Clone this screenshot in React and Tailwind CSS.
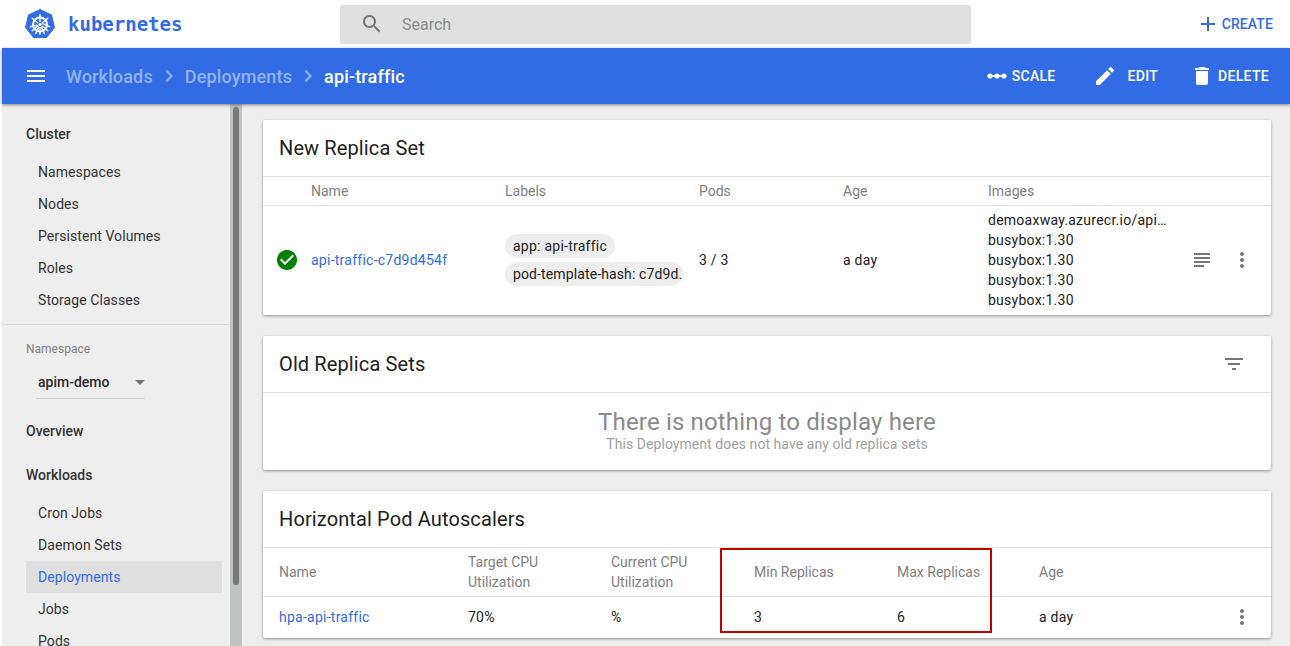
import React from 'react';

const roboto = { fontFamily: 'Roboto, sans-serif' };

const clusterItems = ['Namespaces', 'Nodes', 'Persistent Volumes', 'Roles', 'Storage Classes'];
const workloadItems = ['Cron Jobs', 'Daemon Sets', 'Deployments', 'Jobs', 'Pods'];

const KubeLogo = () => (
  <svg width="30" height="30" viewBox="0 0 30 30">
    <path d="M15 0.5 L26.5 6 L29.5 18.5 L21.5 28.5 L8.5 28.5 L0.5 18.5 L3.5 6 Z" fill="#326ce5" stroke="#326ce5" strokeLinejoin="round" />
    <g stroke="#fff" fill="none" strokeLinecap="round">
      <circle cx="15" cy="15.5" r="7" strokeWidth="2" />
      <path d="M15 5.5V12.5M15 18.5V25.5M7.2 9.3L12.7 13.7M17.3 17.3L22.8 21.7M22.8 9.3L17.3 13.7M12.7 17.3L7.2 21.7M5.3 17.7L12 16.2M18 14.8L24.7 17.7M10.7 24.5L13.7 18.2M16.3 18.2L19.3 24.5" strokeWidth="1.4" />
    </g>
    <circle cx="15" cy="15.5" r="1.6" fill="#fff" />
  </svg>
);

const Icon = ({ d, size = 24, className = '' }) => (
  <svg width={size} height={size} viewBox="0 0 24 24" fill="currentColor" className={className}>
    <path d={d} />
  </svg>
);

const icons = {
  search: 'M15.5 14h-.79l-.28-.27C15.41 12.59 16 11.11 16 9.5 16 5.91 13.09 3 9.5 3S3 5.91 3 9.5 5.91 16 9.5 16c1.61 0 3.09-.59 4.23-1.57l.27.28v.79l5 4.99L20.49 19l-4.99-5zm-6 0C7.01 14 5 11.99 5 9.5S7.01 5 9.5 5 14 7.01 14 9.5 11.99 14 9.5 14z',
  add: 'M19 13h-6v6h-2v-6H5v-2h6V5h2v6h6v2z',
  menu: 'M3 18h18v-2H3v2zm0-5h18v-2H3v2zm0-7v2h18V6H3z',
  chevron: 'M10 6L8.59 7.41 13.17 12l-4.58 4.59L10 18l6-6z',
  edit: 'M3 17.25V21h3.75L17.81 9.94l-3.75-3.75L3 17.25zM20.71 7.04c.39-.39.39-1.02 0-1.41l-2.34-2.34c-.39-.39-1.02-.39-1.41 0l-1.83 1.83 3.75 3.75 1.83-1.83z',
  trash: 'M6 19c0 1.1.9 2 2 2h8c1.1 0 2-.9 2-2V7H6v12zM19 4h-3.5l-1-1h-5l-1 1H5v2h14V4z',
  check: 'M12 2C6.48 2 2 6.48 2 12s4.48 10 10 10 10-4.48 10-10S17.52 2 12 2zm-2 15l-5-5 1.41-1.41L10 14.17l7.59-7.59L19 8l-9 9z',
  lines: 'M14 17H4v2h10v-2zm6-8H4v2h16V9zM4 15h16v-2H4v2zM4 5v2h16V5H4z',
  dots: 'M12 8c1.1 0 2-.9 2-2s-.9-2-2-2-2 .9-2 2 .9 2 2 2zm0 2c-1.1 0-2 .9-2 2s.9 2 2 2 2-.9 2-2-.9-2-2-2zm0 6c-1.1 0-2 .9-2 2s.9 2 2 2 2-.9 2-2-.9-2-2-2z',
  filter: 'M10 18h4v-2h-4v2zM3 6v2h18V6H3zm3 7h12v-2H6v2z',
};

const ScaleIcon = () => (
  <svg width="20" height="20" viewBox="0 0 20 20" fill="#fff">
    <rect x="1" y="9.2" width="18" height="1.6" />
    <circle cx="3" cy="10" r="2.6" />
    <circle cx="10" cy="10" r="2.6" />
    <circle cx="17" cy="10" r="2.6" />
  </svg>
);

const SideItem = ({ label, active }) => (
  <div className={`h-8 ml-6 mr-2 pl-3 flex items-center text-sm tracking-[0.08px] ${active ? 'bg-[#dfdfdf] text-[#326ce5]' : 'text-[#333]'}`}>
    {label}
  </div>
);

const Sidebar = () => (
  <aside className="w-[228px] shrink-0 bg-[#eeeeee] pt-[14px]">
    <div className="h-8 pl-6 flex items-center text-sm font-medium text-[#333]">Cluster</div>
    <div className="mt-[6px]">
      {clusterItems.map((item) => <SideItem key={item} label={item} />)}
    </div>
    <div className="mt-2 border-t border-[#d9d9d9]" />
    <div className="pl-6 mt-4 text-xs leading-4 text-[#7f7f7f]">Namespace</div>
    <div className="ml-[34px] mt-[9px] w-[109px] h-[33px] border-b border-[#d5d5d5] flex items-center justify-between pl-[2px] text-sm font-medium text-[#2a2a2a]">
      <span>apim-demo</span>
      <span className="w-0 h-0 border-x-[5px] border-x-transparent border-t-[5px] border-t-[#757575]" />
    </div>
    <div className="h-8 pl-6 mt-4 flex items-center text-sm font-medium text-[#333]">Overview</div>
    <div className="h-8 pl-6 mt-3 flex items-center text-sm font-medium text-[#333]">Workloads</div>
    <div className="mt-[6px]">
      {workloadItems.map((item) => <SideItem key={item} label={item} active={item === 'Deployments'} />)}
    </div>
  </aside>
);

const Card = ({ title, action, children }) => (
  <section className="bg-white rounded-[2px] shadow-[0_1px_3px_rgba(0,0,0,0.4)]">
    <div className="h-[57px] px-4 flex items-center justify-between border-b border-[#e0e0e0]">
      <h2 className="text-xl font-normal tracking-[0.12px] text-[#212121]">{title}</h2>
      {action}
    </div>
    {children}
  </section>
);

const ReplicaSetTable = () => (
  <>
    <div className="grid grid-cols-[48px_194px_194px_144px_145px_1fr] h-[29px] items-center border-b border-[#e0e0e0] text-sm text-[#7f7f7f]">
      <div />
      <div>Name</div>
      <div>Labels</div>
      <div>Pods</div>
      <div>Age</div>
      <div>Images</div>
    </div>
    <div className="grid grid-cols-[48px_194px_194px_144px_145px_1fr] h-[109px] pb-[2px] items-center text-sm tracking-[0.25px] text-[#212121]">
      <div className="pl-[12px] text-[#008000]"><Icon d={icons.check} /></div>
      <div className="text-[#326ce5]">api-traffic-c7d9d454f</div>
      <div className="flex flex-col items-start gap-1 pr-4">
        <span className="h-6 px-2 rounded-xl bg-[#eeeeee] flex items-center">app: api-traffic</span>
        <span className="h-6 w-[178px] pl-2 rounded-xl bg-[#eeeeee] flex items-center overflow-hidden whitespace-nowrap tracking-[0.12px]">pod-template-hash: c7d9d.</span>
      </div>
      <div>3 / 3</div>
      <div>a day</div>
      <div className="flex items-center">
        <div className="w-[202px] leading-5">
          <div>demoaxway.azurecr.io/api…</div>
          <div>busybox:1.30</div>
          <div>busybox:1.30</div>
          <div>busybox:1.30</div>
          <div>busybox:1.30</div>
        </div>
        <div className="flex items-center gap-4 text-[#757575]">
          <Icon d={icons.lines} />
          <Icon d={icons.dots} />
        </div>
      </div>
    </div>
  </>
);

const AutoscalerTable = () => (
  <>
    <div className="grid grid-cols-[189px_143px_143px_143px_142px_1fr] pl-4 h-[49px] items-center border-b border-[#e0e0e0] text-sm leading-5 text-[#7f7f7f]">
      <div>Name</div>
      <div>Target CPU<br />Utilization</div>
      <div>Current CPU<br />Utilization</div>
      <div>Min Replicas</div>
      <div>Max Replicas</div>
      <div>Age</div>
    </div>
    <div className="grid grid-cols-[189px_143px_143px_143px_142px_1fr] pl-4 h-[41px] pb-[2px] items-center text-sm tracking-[0.25px] text-[#212121]">
      <div className="text-[#326ce5]">hpa-api-traffic</div>
      <div>70%</div>
      <div>%</div>
      <div>3</div>
      <div>6</div>
      <div className="flex items-center justify-between pr-[17px]">
        <span>a day</span>
        <Icon d={icons.dots} className="text-[#757575]" />
      </div>
    </div>
  </>
);

export default function App() {
  return (
    <div className="relative h-[646px] overflow-hidden pl-[2px] bg-white flex flex-col" style={roboto}>
      {/* top bar */}
      <div className="h-12 shrink-0 flex items-center bg-white">
        <div className="ml-[23px] flex items-center gap-[13px] w-[315px]">
          <KubeLogo />
          <span className="text-[19px] font-bold text-[#326ce5]" style={{ fontFamily: '"DejaVu Sans Mono", monospace' }}>kubernetes</span>
        </div>
        <div className="w-[631px] h-[39px] rounded-[2px] bg-[#e0e0e0] flex items-center pl-5 text-[#757575]">
          <Icon d={icons.search} />
          <span className="ml-[18px] mt-[2px] text-base text-[#8a8a8a]">Search</span>
        </div>
        <div className="ml-auto mr-[17px] flex items-center gap-[2px] text-sm font-medium tracking-[0.1px] text-[#326ce5]">
          <Icon d={icons.add} />
          <span>CREATE</span>
        </div>
      </div>

      {/* blue toolbar */}
      <div className="relative z-10 h-14 shrink-0 flex items-center bg-[#326ce5] shadow-[0_1px_3px_rgba(0,0,0,0.45)] text-white">
        <Icon d={icons.menu} className="ml-[22px]" />
        <div className="ml-[18px] flex items-center text-lg font-medium tracking-[0.15px]">
          <span className="mt-[2px] text-[#92b3f2]">Workloads</span>
          <Icon d={icons.chevron} className="mx-1 text-[#92b3f2]" />
          <span className="mt-[2px] text-[#92b3f2]">Deployments</span>
          <Icon d={icons.chevron} className="mx-1 text-[#92b3f2]" />
          <span className="mt-[2px]">api-traffic</span>
        </div>
        <div className="ml-auto mr-[21px] flex items-center text-sm font-medium tracking-[0.3px]">
          <ScaleIcon />
          <span className="ml-[5px]">SCALE</span>
          <Icon d={icons.edit} className="ml-[37px]" />
          <span className="ml-[11px]">EDIT</span>
          <Icon d={icons.trash} className="ml-[32px]" />
          <span className="ml-[4px]">DELETE</span>
        </div>
      </div>

      {/* body */}
      <div className="flex flex-1 min-h-0 bg-[#eeeeee]">
        <Sidebar />
        <div className="w-3 shrink-0 bg-[#bfc2c1] pl-[3px] pr-[3px] pt-[3px]">
          <div className="h-[478px] rounded-full bg-[#767a7a]" />
        </div>
        <main className="flex-1 pl-[21px] pr-[19px] pt-4 flex flex-col gap-[21px]">
          <Card title="New Replica Set">
            <ReplicaSetTable />
          </Card>
          <Card title="Old Replica Sets" action={<Icon d={icons.filter} className="mr-[9px] text-[#757575]" />}>
            <div className="h-[77px] pb-1 flex flex-col items-center justify-center">
              <div className="text-2xl leading-7 tracking-[0.16px] text-[#8a8a8a]">There is nothing to display here</div>
              <div className="text-sm leading-4 tracking-[0.06px] text-[#a0a0a0]">This Deployment does not have any old replica sets</div>
            </div>
          </Card>
          <Card title="Horizontal Pod Autoscalers">
            <AutoscalerTable />
          </Card>
        </main>
      </div>

      {/* highlight drawn over the screenshot */}
      <div className="absolute left-[720px] top-[548px] w-[272px] h-[85px] border-2 border-[#c00000]" />
    </div>
  );
}
